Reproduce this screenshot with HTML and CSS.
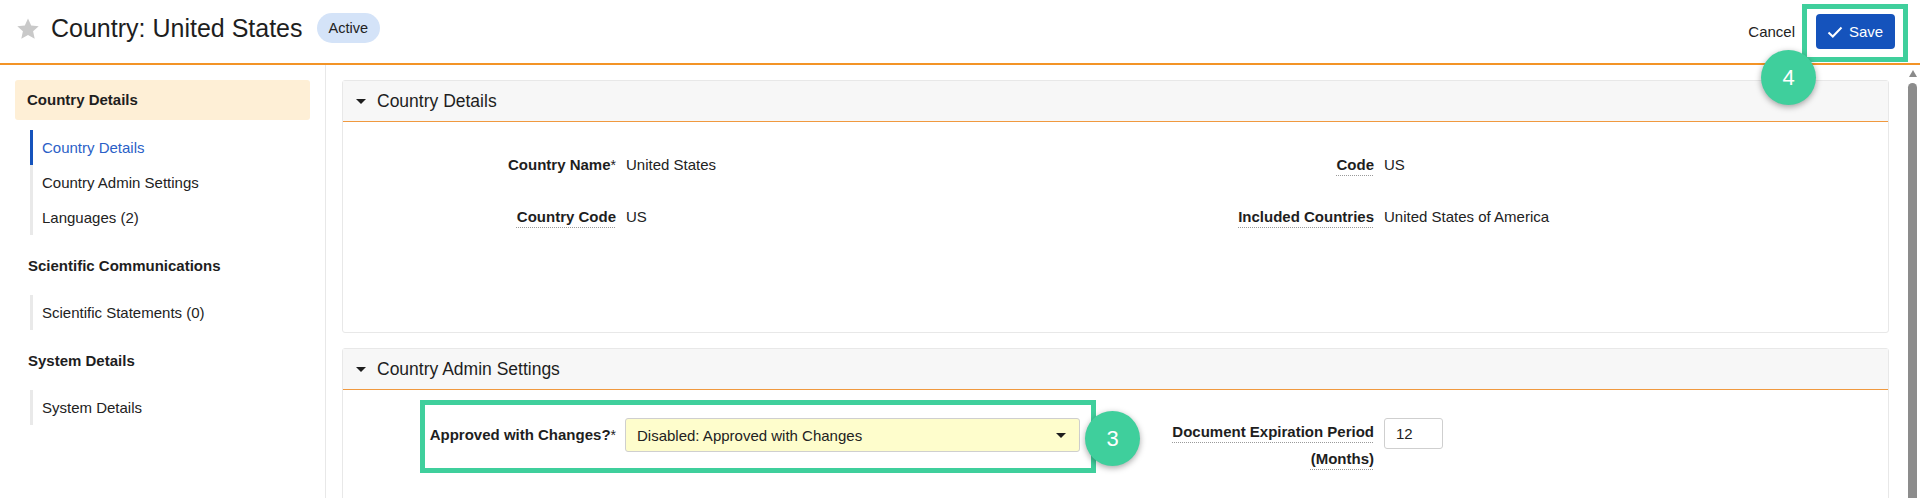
FILE: index.html
```html
<!DOCTYPE html>
<html>
<head>
<meta charset="utf-8">
<link rel="stylesheet" href="styles.css">
</head>
<body>
<header class="topbar">
  <svg class="star" viewBox="0 0 24 24" width="24" height="24"><path d="M12 1.5l3.2 6.9 7.5.8-5.6 5.1 1.6 7.4L12 17.9l-6.7 3.8 1.6-7.4L1.3 9.2l7.5-.8z" fill="#c9c9c9"/></svg>
  <h1 class="title">Country: United States</h1>
  <span class="badge">Active</span>
  <div class="actions">
    <span class="cancel">Cancel</span>
    <button class="save"><svg viewBox="0 0 16 16" width="16" height="16"><polyline points="1.5,8.5 5.8,12.5 14.5,3.5" fill="none" stroke="#fff" stroke-width="2"/></svg><span>Save</span></button>
  </div>
</header>
<div class="layout">
  <nav class="sidebar">
    <div class="side-head">Country Details</div>
    <ul class="side-list">
      <li class="active">Country Details</li>
      <li>Country Admin Settings</li>
      <li>Languages (2)</li>
    </ul>
    <div class="side-title">Scientific Communications</div>
    <ul class="side-list">
      <li>Scientific Statements (0)</li>
    </ul>
    <div class="side-title">System Details</div>
    <ul class="side-list">
      <li>System Details</li>
    </ul>
  </nav>
  <main class="main">
    <div class="content">
      <section class="panel panel-one">
        <div class="panel-head"><span class="caret"></span>Country Details</div>
        <div class="panel-body fields">
          <div class="label">Country Name<span class="req">*</span></div>
          <div class="value">United States</div>
          <div class="label"><span class="dotted">Code</span></div>
          <div class="value">US</div>
          <div class="label"><span class="dotted">Country Code</span></div>
          <div class="value">US</div>
          <div class="label"><span class="dotted">Included Countries</span></div>
          <div class="value">United States of America</div>
        </div>
      </section>
      <section class="panel panel-two">
        <div class="panel-head"><span class="caret"></span>Country Admin Settings</div>
        <div class="panel-body fields fields-form">
          <div class="label label-mid">Approved with Changes?<span class="req">*</span></div>
          <div class="value"><div class="select">Disabled: Approved with Changes<span class="caret caret-sel"></span></div></div>
          <div class="label"><span class="dotted">Document Expiration Period (Months)</span></div>
          <div class="value"><div class="input">12</div></div>
        </div>
      </section>
    </div>
    <div class="scrollbar">
      <span class="sb-arrow"></span>
      <span class="sb-thumb"></span>
    </div>
  </main>
</div>
<div class="hl hl-save"></div>
<div class="step step-4">4</div>
<div class="hl hl-field"></div>
<div class="step step-3">3</div>
</body>
</html>
```
FILE: styles.css
```css
* { box-sizing: border-box; }
html, body { margin: 0; padding: 0; }
body {
  width: 1920px;
  height: 498px;
  overflow: hidden;
  font-family: "Liberation Sans", Arial, sans-serif;
  color: #222;
  background: #fff;
  position: relative;
}
.topbar {
  height: 65px;
  border-bottom: 2px solid #f39426;
  display: flex;
  align-items: center;
  padding: 0 25px 2px 16px;
}
.star { display: block; margin-top: -3px; }
.title {
  margin: 0 0 0 11px;
  font-size: 25px;
  font-weight: normal;
  line-height: 30px;
  margin-top: -6px;
  color: #1e1e1e;
}
.badge {
  margin-left: 14px;
  margin-top: -6px;
  height: 30px;
  line-height: 30px;
  padding: 0 12px;
  border-radius: 15px;
  background: #d4e3f8;
  font-size: 14.5px;
  color: #222;
}
.actions {
  margin-left: auto;
  display: flex;
  align-items: center;
  gap: 21px;
  margin-top: 2px;
}
.cancel { font-size: 15px; color: #222; }
.save {
  display: flex;
  align-items: center;
  gap: 6px;
  height: 35px;
  width: 79px;
  padding: 0 0 0 11px;
  border: 0;
  border-radius: 4px;
  background: #1553bc;
  color: #fff;
  font-family: "Liberation Sans", Arial, sans-serif;
  font-size: 15px;
}
.save svg { display: block; }
.layout {
  display: flex;
  height: 433px;
}
.sidebar {
  width: 326px;
  flex: none;
  border-right: 1px solid #e8e8e8;
  padding: 15px 15px 0 15px;
}
.side-head {
  height: 40px;
  line-height: 40px;
  padding-left: 12px;
  background: #feefd6;
  border-radius: 3px;
  font-weight: bold;
  font-size: 15px;
  color: #1e1e1e;
}
.side-list {
  list-style: none;
  margin: 10px 0 0 15px;
  padding: 0;
}
.side-list li {
  height: 35px;
  line-height: 35px;
  padding-left: 9px;
  border-left: 3px solid #e9e9e9;
  font-size: 15px;
  color: #222;
}
.side-list li.active {
  border-left-color: #1553bc;
  color: #2b5fc7;
}
.side-title {
  margin-top: 19px;
  margin-bottom: 17px;
  height: 24px;
  line-height: 24px;
  padding-left: 13px;
  font-weight: bold;
  font-size: 15px;
  color: #1e1e1e;
}
.main {
  flex: 1;
  display: flex;
  min-width: 0;
}
.content {
  flex: 1;
  padding: 15px 16px 0 16px;
  overflow: hidden;
}
.panel {
  border: 1px solid #e8e8e8;
  border-radius: 3px;
  background: #fff;
}
.panel-two { margin-top: 15px; }
.panel-head {
  height: 41px;
  background: #f7f7f7;
  border-bottom: 1px solid #f0993f;
  display: flex;
  align-items: center;
  padding-left: 13px;
  font-size: 17.5px;
  color: #1e1e1e;
}
.caret {
  width: 0;
  height: 0;
  border-left: 5px solid transparent;
  border-right: 5px solid transparent;
  border-top: 5px solid #1e1e1e;
  margin-right: 11px;
}
.panel-one .panel-body { height: 210px; }
.panel-two .panel-body { height: 120px; }
.fields {
  display: grid;
  grid-template-columns: 273px 528px 210px 1fr;
  grid-auto-rows: 52px;
  column-gap: 10px;
  padding-top: 29px;
  align-content: start;
}
.fields-form {
  padding-top: 28px;
  grid-auto-rows: 60px;
}
.label {
  text-align: right;
  font-weight: bold;
  font-size: 15px;
  line-height: 27px;
  color: #1e1e1e;
}
.label-mid {
  line-height: 34px;
  padding-top: 0;
}
.value {
  font-size: 15px;
  line-height: 27px;
  color: #222;
}
.req { font-weight: normal; font-size: 14px; }
.dotted {
  text-decoration: underline dotted #9a9a9a;
  text-decoration-thickness: 1px;
  text-underline-offset: 5px;
}
.select {
  width: 455px;
  height: 34px;
  margin-left: -1px;
  border: 1px solid #cfcfcf;
  border-radius: 3px;
  background: #fefdcc;
  display: flex;
  align-items: center;
  justify-content: space-between;
  padding: 0 10px 0 11px;
  font-size: 15px;
  color: #222;
}
.caret-sel { margin-right: 3px; }
.input {
  width: 59px;
  height: 31px;
  border: 1px solid #cfcfcf;
  border-radius: 3px;
  padding-left: 11px;
  line-height: 29px;
  font-size: 15px;
}
.scrollbar {
  width: 15px;
  flex: none;
  position: relative;
  display: flex;
  flex-direction: column;
  align-items: center;
}
.sb-arrow {
  margin-top: 5px;
  width: 0;
  height: 0;
  border-left: 4px solid transparent;
  border-right: 4px solid transparent;
  border-bottom: 7px solid #8a8a8a;
}
.sb-thumb {
  margin-top: 6px;
  width: 9px;
  flex: 1;
  background: #8c8c8c;
  border-radius: 5px 5px 0 0;
}
.hl {
  position: absolute;
  border: 5px solid #3fcf9c;
}
.hl-save { left: 1802px; top: 4px; width: 106px; height: 58px; }
.hl-field { left: 420px; top: 400px; width: 676px; height: 73px; }
.step {
  position: absolute;
  width: 55px;
  height: 55px;
  border-radius: 50%;
  background: #3fcf9c;
  color: #fff;
  font-size: 22px;
  line-height: 55px;
  text-align: center;
  box-shadow: 0 2px 6px rgba(0,0,0,0.35);
}
.step-4 { left: 1761px; top: 50px; }
.step-3 { left: 1085px; top: 411px; }
```
